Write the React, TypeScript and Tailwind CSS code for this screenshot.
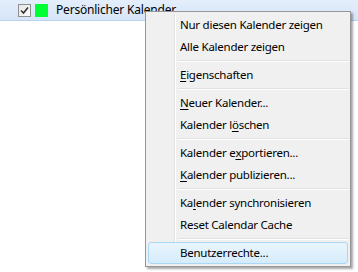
const items: (null | { label: string; u?: number })[] = [
  { label: "Nur diesen Kalender zeigen" },
  { label: "Alle Kalender zeigen" },
  null,
  { label: "Eigenschaften", u: 0 },
  null,
  { label: "Neuer Kalender...", u: 0 },
  { label: "Kalender löschen", u: 10 },
  null,
  { label: "Kalender exportieren...", u: 10 },
  { label: "Kalender publizieren...", u: 0 },
  null,
  { label: "Kalender synchronisieren", u: 2 },
  { label: "Reset Calendar Cache" },
  null,
  { label: "Benutzerrechte..." },
];

function Label({ label, u }: { label: string; u?: number }) {
  if (u === undefined) return <>{label}</>;
  return (
    <>
      {label.slice(0, u)}
      <span className="underline underline-offset-2">{label[u]}</span>
      {label.slice(u + 1)}
    </>
  );
}

export default function App() {
  return (
    <div className="relative w-[358px] h-[272px] bg-white overflow-hidden font-['Noto_Sans',sans-serif] text-[11.5px] tracking-[-0.25px] text-black">
      <div className="h-[21px] flex items-center border-b border-[#b8d2f0] bg-gradient-to-b from-[#e4eefb] to-[#d6e5f8]">
        <div className="ml-[18px] w-[13px] h-[13px] border border-[#8e8f8f] bg-gradient-to-br from-[#e6e6e6] to-[#fbfbfb] flex items-center justify-center">
          <svg width="9" height="9" viewBox="0 0 9 9">
            <path d="M1 4.5 L3.5 7 L8 1.5" stroke="#333" strokeWidth="1.6" fill="none" />
          </svg>
        </div>
        <div className="ml-[4px] w-[13px] h-[13px] bg-[#00ff33]" />
        <span className="ml-[8px] text-[12px] tracking-[-0.2px]">Persönlicher Kalender</span>
      </div>

      <div className="absolute left-[145px] top-[11px] w-[206px] border border-[#979797] bg-[#f0f0f0] p-[2px] shadow-[2px_2px_2px_rgba(0,0,0,0.35)]">
        <div className="absolute left-[28px] top-[2px] bottom-[2px] w-[2px] border-l border-[#e2e3e3] border-r border-r-white" />
        {items.map((it, i) =>
          it === null ? (
            <div key={i} className="h-[6px] flex items-center pl-[30px]">
              <div className="w-full h-[2px] border-t border-[#e0e0e0] border-b border-b-white" />
            </div>
          ) : i === items.length - 1 ? (
            <div
              key={i}
              className="relative h-[22px] flex items-center pl-[32px] rounded-[3px] border border-[#a8d8f4] bg-gradient-to-b from-[#eaf5fd] to-[#d5ebfb]"
            >
              <span className="-ml-px">
                <Label {...it} />
              </span>
            </div>
          ) : (
            <div key={i} className="relative h-[22px] flex items-center pl-[32px]">
              <Label {...it} />
            </div>
          )
        )}
      </div>
    </div>
  );
}
